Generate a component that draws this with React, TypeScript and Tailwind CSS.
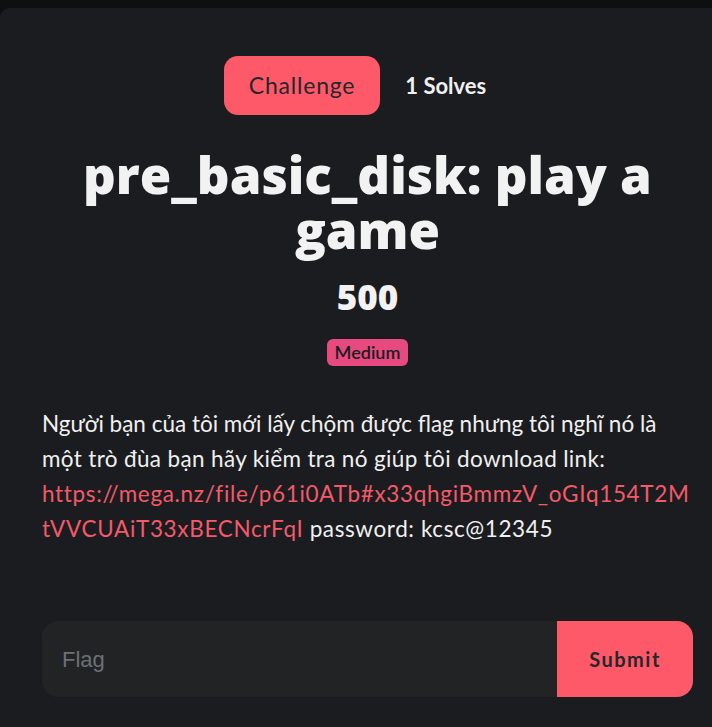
import React from "react";

export default function App() {
  return (
    <div className="w-[712px] h-[727px] overflow-hidden bg-[#0e0f11]">
      <div className="mt-[8px] w-[735px] h-[760px] rounded-tl-[10px] bg-[#1b1c1f] px-[42px] pt-[48px]">
        <div className="flex justify-center">
          <button className="h-[59px] px-[25px] rounded-[14px] bg-[#fd5968] text-[#26272b] text-[23px] font-['Lato',sans-serif] tracking-[0.8px]">
            Challenge
          </button>
          <button className="h-[59px] px-[25px] text-[#f0f0f0] text-[22px] font-bold font-['Lato',sans-serif]">
            1 Solves
          </button>
        </div>
        <h1 className="mt-[32px] text-center text-[51px] leading-[55px] font-extrabold text-[#f2f2f2] font-['Open_Sans',sans-serif]">
          pre_basic_disk: play a game
        </h1>
        <div className="mt-[20px] text-center text-[35px] leading-[40px] font-extrabold text-[#f2f2f2] font-['Open_Sans',sans-serif]">
          500
        </div>
        <div className="mt-[22px] flex justify-center">
          <span className="px-[8px] h-[27px] leading-[27px] rounded-[6px] bg-[#e64a7e] text-[#1b1c1f] text-[18px] font-semibold font-['Lato',sans-serif]">
            Medium
          </span>
        </div>
        <p className="mt-[40px] text-[22.5px] leading-[35px] tracking-[0.35px] text-[#f0f0f0] font-['Lato',sans-serif]">
          <span className="tracking-normal">Người bạn của tôi mới lấy chộm được flag nhưng tôi nghĩ nó là</span> một trò đùa bạn hãy kiểm tra nó giúp tôi download link:{" "}
          <span className="text-[#f25a6a] tracking-[0.68px] [overflow-wrap:break-word]">
            https://mega.nz/file/p61i0ATb#x33qhgiBmmzV_oGIq154T2MtVVCUAiT33xBECNcrFqI
          </span>{" "}
          <span className="tracking-[0.6px]">password: kcsc@12345</span>
        </p>
        <div className="mt-[75px] flex h-[76px] w-[651px] rounded-[16px] overflow-hidden bg-[#222325]">
          <input
            placeholder="Flag"
            className="flex-1 bg-transparent px-[20px] text-[22px] text-[#e0e0e0] placeholder:text-[#6b7076] outline-none font-['Liberation_Sans',sans-serif]"
          />
          <button className="w-[136px] bg-[#fd5968] text-[#26272b] text-[20px] font-bold tracking-[1.5px] font-['Lato',sans-serif]">
            Submit
          </button>
        </div>
      </div>
    </div>
  );
}
